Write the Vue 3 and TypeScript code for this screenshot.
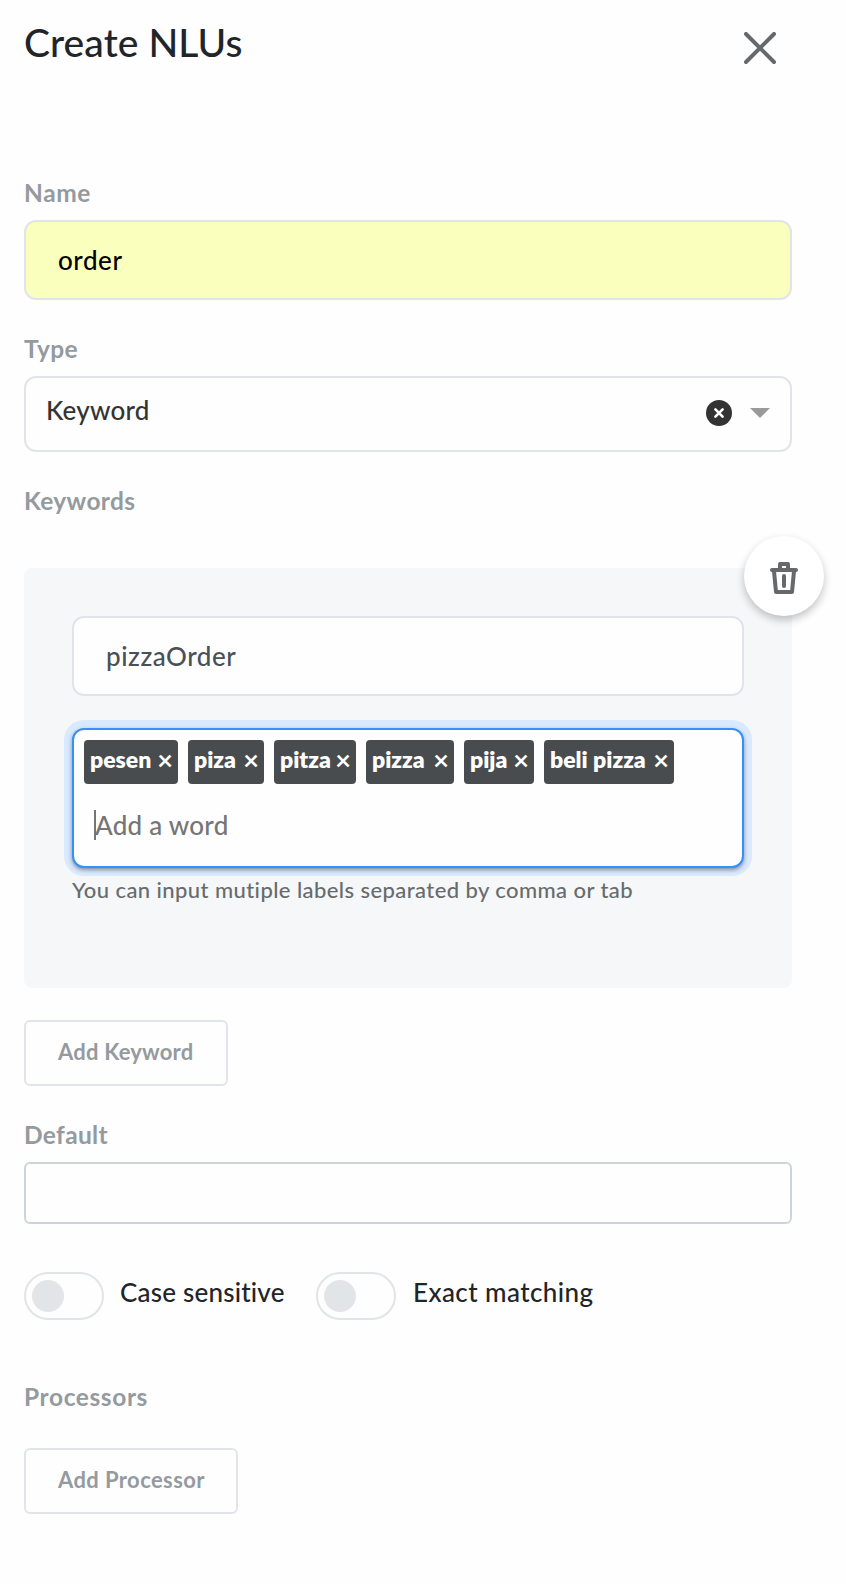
<script setup lang="ts">
import { ref } from 'vue'

interface Tag {
  word: string
  width: number
}

const name = ref('order')
const keyword = ref('pizzaOrder')
const type = ref('Keyword')
const fallback = ref('')
const tags = ref<Tag[]>([
  { word: 'pesen', width: 94 },
  { word: 'piza', width: 76 },
  { word: 'pitza', width: 82 },
  { word: 'pizza', width: 88 },
  { word: 'pija', width: 70 },
  { word: 'beli pizza', width: 130 },
])
const caseSensitive = ref(false)
const exactMatching = ref(false)

function removeTag(index: number) {
  tags.value.splice(index, 1)
}
</script>

<template>
  <main class="drawer">
    <header class="head">
      <h1 class="title">Create NLUs</h1>
      <button class="close" type="button" aria-label="Close">
        <svg width="32" height="32" viewBox="0 0 32 32">
          <path d="M2 2L30 30M30 2L2 30" fill="none" stroke="#66696b" stroke-width="4" stroke-linecap="round" />
        </svg>
      </button>
    </header>

    <label class="label label-name">Name</label>
    <input v-model="name" class="input autofilled" type="text" />

    <label class="label label-type">Type</label>
    <div class="select">
      <span class="select-value">{{ type }}</span>
      <svg class="clear" width="26" height="26" viewBox="0 0 26 26">
        <circle cx="13" cy="13" r="13" fill="#333" />
        <path d="M9.4 9.4L16.6 16.6M16.6 9.4L9.4 16.6" stroke="#fff" stroke-width="2.6" stroke-linecap="round" />
      </svg>
      <svg class="arrow" width="20" height="10" viewBox="0 0 20 10">
        <path d="M0 0H20L10 10Z" fill="#999" />
      </svg>
    </div>

    <label class="label label-keywords">Keywords</label>
    <section class="panel">
      <button class="trash" type="button" aria-label="Delete keyword">
        <svg width="28" height="32" viewBox="0 0 28 32" fill="none" stroke="#66696b" stroke-linejoin="round" stroke-linecap="round">
          <path d="M2 8H26" stroke-width="4" />
          <path d="M10 7V2H18V7" stroke-width="4" />
          <path d="M4 9L6 30H22L24 9" stroke-width="4" />
          <path d="M14 14V24" stroke-width="4" />
        </svg>
      </button>
      <input v-model="keyword" class="input keyword" type="text" />
      <div class="tagbox">
        <div class="tags">
          <span v-for="(tag, i) in tags" :key="tag.word" class="tag" :style="{ width: tag.width + 'px' }">
            <span>{{ tag.word }}</span>
            <span class="tag-x" @click="removeTag(i)">×</span>
          </span>
        </div>
        <div class="entry"><span class="caret"></span><span class="placeholder">Add a word</span></div>
      </div>
      <p class="help">You can input mutiple labels separated by comma or tab</p>
    </section>

    <button class="button button-keyword" type="button">Add Keyword</button>

    <label class="label label-default">Default</label>
    <input v-model="fallback" class="input plain" type="text" />

    <div class="switches">
      <span class="switch" @click="caseSensitive = !caseSensitive"><i class="knob"></i></span>
      <span class="switch-text case">Case sensitive</span>
      <span class="switch" @click="exactMatching = !exactMatching"><i class="knob"></i></span>
      <span class="switch-text exact">Exact matching</span>
    </div>

    <label class="label label-processors">Processors</label>
    <button class="button button-processor" type="button">Add Processor</button>
  </main>
</template>

<style>
body {
  margin: 0;
  background: #fefefe;
}
</style>

<style scoped>
.drawer,
.drawer * {
  box-sizing: border-box;
}
.drawer {
  width: 846px;
  height: 1584px;
  padding: 0 54px 0 24px;
  display: flex;
  flex-direction: column;
  background: #fefefe;
  font-family: Lato, sans-serif;
  font-weight: 500;
  font-size: 26px;
  color: #212529;
  font-variant-ligatures: none;
}
button,
input {
  font-family: inherit;
  margin: 0;
  outline: none;
}
.head {
  height: 175px;
  flex: none;
  display: flex;
  justify-content: space-between;
  align-items: flex-start;
  padding: 17px 16px 0 0;
}
.title {
  margin: 0;
  padding-top: 1px;
  font-size: 39px;
  line-height: 48px;
  font-weight: 500;
  letter-spacing: 0.08px;
}
.close {
  margin-top: 15px;
  padding: 0;
  border: 0;
  background: none;
  width: 32px;
  height: 32px;
}
.close svg {
  display: block;
}
.label {
  flex: none;
  height: 35px;
  line-height: 36px;
  font-size: 24.5px;
  font-weight: 700;
  letter-spacing: 0.35px;
  color: #949a9e;
}
.label-name {
  letter-spacing: 0.6px;
}
.label-type {
  margin-top: 31px;
}
.label-keywords {
  margin-top: 31px;
}
.label-default {
  margin-top: 31px;
}
.label-processors {
  margin-top: 59px;
  letter-spacing: 0.6px;
}
.input {
  flex: none;
  width: 100%;
  height: 80px;
  margin-top: 10px;
  padding: 0 32px;
  border: 2px solid #e1e5e9;
  border-radius: 12px;
  background: #fefefe;
  font-size: 26px;
  font-weight: 500;
  color: #495057;
  letter-spacing: 0.55px;
}
.autofilled {
  background: #faffbd;
  color: #000;
}
.select {
  flex: none;
  height: 76px;
  margin-top: 10px;
  border: 2px solid #e1e5e9;
  border-radius: 12px;
  background: #fefefe;
  display: flex;
  align-items: center;
  padding: 0 20px;
}
.select-value {
  flex: 1;
  color: #333;
  line-height: 36px;
  padding-bottom: 8px;
  letter-spacing: 0.2px;
}
.clear {
  margin-top: -2px;
  margin-right: 18px;
}
.arrow {
  margin-top: -2px;
}
.panel {
  flex: none;
  position: relative;
  height: 420px;
  margin-top: 50px;
  padding: 48px;
  border-radius: 8px;
  background: #f5f7f9;
}
.keyword {
  display: block;
  margin-top: 0;
}
.trash {
  position: absolute;
  top: -32px;
  right: -32px;
  width: 80px;
  height: 80px;
  padding: 4px 0 0;
  border: 0;
  border-radius: 50%;
  background: #fff;
  box-shadow: 0 4px 8px rgba(0, 0, 0, 0.24);
  display: flex;
  align-items: center;
  justify-content: center;
}
.tagbox {
  height: 140px;
  margin-top: 32px;
  padding: 10px;
  border: 2px solid #3590fb;
  border-radius: 12px;
  background: #fefefe;
  box-shadow: 0 2px 4px rgba(0, 0, 0, 0.4), 0 0 0 8px #d9eaff;
}
.tags {
  display: flex;
  gap: 10px;
}
.tag {
  height: 44px;
  padding: 0 5px 4px 6px;
  border-radius: 4px;
  background: #484c4e;
  color: #fff;
  font-size: 23px;
  font-weight: 800;
  line-height: 39px;
  display: flex;
  justify-content: space-between;
  white-space: nowrap;
}
.tag-x {
  font-size: 27px;
  font-weight: 700;
}
.entry {
  display: flex;
  align-items: center;
  margin-top: 26px;
  padding-left: 10px;
  height: 30px;
}
.caret {
  width: 2px;
  height: 30px;
  margin-right: -1px;
  background: #757575;
}
.placeholder {
  line-height: 30px;
  padding-bottom: 1px;
  color: #757575;
  letter-spacing: 0.25px;
}
.help {
  margin: 6px 0 0;
  font-size: 22px;
  line-height: 32px;
  color: #676b6d;
  letter-spacing: 0.42px;
  white-space: nowrap;
}
.button {
  flex: none;
  height: 66px;
  padding: 0 0 3px 32px;
  border: 2px solid #e1e5e9;
  border-radius: 6px;
  background: #fefefe;
  text-align: left;
  font-size: 22px;
  font-weight: 700;
  color: #949a9e;
}
.button-keyword {
  width: 204px;
  margin-top: 32px;
  letter-spacing: 0.2px;
}
.button-processor {
  width: 214px;
  margin-top: 34px;
  letter-spacing: 0.4px;
}
.plain {
  height: 62px;
  border-color: #ced4da;
  border-radius: 6px;
}
.switches {
  flex: none;
  display: flex;
  align-items: center;
  height: 48px;
  margin-top: 48px;
}
.switch {
  flex: none;
  width: 80px;
  height: 48px;
  padding: 6px;
  border: 2px solid #e1e5e8;
  border-radius: 24px;
  background: #fefefe;
}
.knob {
  display: block;
  width: 32px;
  height: 32px;
  border-radius: 50%;
  background: #e1e5e8;
}
.switch-text {
  padding-left: 16px;
  padding-bottom: 8px;
  white-space: nowrap;
}
.case {
  width: 212px;
  letter-spacing: 0.2px;
}
.exact {
  padding-left: 17px;
  letter-spacing: 0.42px;
}
</style>
